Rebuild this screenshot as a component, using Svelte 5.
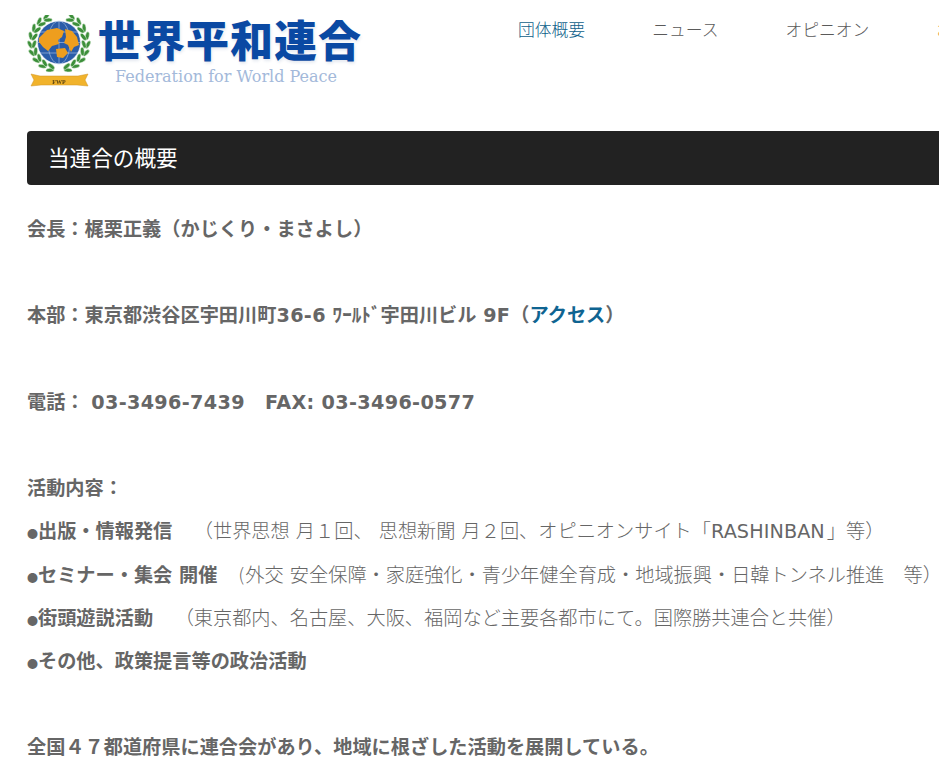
<script>
  const nav = [
    { label: '団体概要', active: true },
    { label: 'ニュース' },
    { label: 'オピニオン' },
    { label: 'お問い合わせ', accent: true }
  ];

  const cx = 32;
  const cy = 27.5;
  const steps = [26, 43, 60, 77, 94, 111, 128, 145, 162];
  const leaves = steps.flatMap((t) =>
    [-1, 1].flatMap((side) =>
      [
        { r: 29, tilt: 24 },
        { r: 25, tilt: -24 }
      ].map(({ r, tilt }) => {
        const a = (t * Math.PI) / 180;
        return {
          x: cx + side * r * Math.sin(a),
          y: cy - r * Math.cos(a),
          rot: side * (t - 90 + tilt)
        };
      })
    )
  );
</script>

<div class="page">
  <header class="header">
    <a class="logo" href="#top">
      <svg class="emblem" viewBox="0 0 64 76" width="64" height="76" aria-hidden="true">
        <g fill="#3c8f3a" stroke="#e6f2e4" stroke-width=".5">
          {#each leaves as l}
            <ellipse cx={l.x} cy={l.y} rx="1.9" ry="4.2" transform="rotate({l.rot} {l.x} {l.y})" />
          {/each}
        </g>
        <circle cx={cx} cy={cy} r="21.5" fill="#2a5ca8" stroke="#fff" stroke-width=".6" />
        <g fill="none" stroke="#b5cbe8" stroke-width=".6">
          <ellipse cx={cx} cy={cy} rx="11" ry="21.5" />
          <path d="M10.500 27.500h43M13 17h38M13 38h38M32 6v43" />
        </g>
        <path d="M12 23L20 15L30 13L37 16L35 22L31 25L32 29L25 31L21 36L16 32L12 27ZM38 14L45 16L50 22L52 30L47 32L44 37L41 30L37 28L39 22ZM29 34L38 33L41 38L36 43L30 42Z" fill="#ee9e1e" />
        <path d="M4 59l9 2h38l10-2-3 6 3 6-11-1H14L4 71l3-6z" fill="#f1b32c" stroke="#cf9320" stroke-width=".5" />
        <text x="32" y="68.500" text-anchor="middle" class="fwp">FWP</text>
      </svg>
      <span class="wordmark">
        <span class="name">世界平和連合</span>
        <span class="tagline">Federation for World Peace</span>
      </span>
    </a>
    <nav class="nav">
      {#each nav as item}
        <a href="#top" class:active={item.active} class:accent={item.accent}>{item.label}</a>
      {/each}
    </nav>
  </header>

  <main class="main">
    <h1 class="title">当連合の概要</h1>
    <div class="body">
      <strong>会長：梶栗正義（かじくり・まさよし）</strong><br /><br />
      <strong>本部：東京都渋谷区宇田川町<span class="lat">36-6</span> ﾜｰﾙﾄﾞ宇田川ビル <span class="lat">9F</span>（<a href="#top">アクセス</a>）</strong><br /><br />
      <strong>電話： <span class="lat">03-3496-7439</span> &nbsp; <span class="lat">FAX: 03-3496-0577</span></strong><br /><br />
      <strong>活動内容：</strong><br />
      <span class="dot">●</span><strong>出版・情報発信</strong><span class="note">（世界思想 月１回、 思想新聞 月２回、オピニオンサイト「<span class="rashin">RASHINBAN</span>」等）</span><br />
      <span class="dot">●</span><strong>セミナー・集会 開催</strong><span class="note narrow">(外交 安全保障・家庭強化・青少年健全育成・地域振興・日韓トンネル推進　等）</span><br />
      <span class="dot">●</span><strong>街頭遊説活動</strong><span class="note">（東京都内、名古屋、大阪、福岡など主要各都市にて。国際勝共連合と共催）</span><br />
      <span class="dot">●</span><strong>その他、政策提言等の政治活動</strong><br /><br />
      <strong>全国４７都道府県に連合会があり、地域に根ざした活動を展開している。</strong>
    </div>
  </main>
</div>

<style>
  :global(html), :global(body) {
    margin: 0;
    overflow: hidden;
    background: #fff;
  }
  .page {
    width: 1200px;
    padding: 0 0 0 27px;
    box-sizing: border-box;
    font-family: "DejaVu Sans", "Noto Sans CJK JP", sans-serif;
    color: #666;
  }
  .header {
    display: flex;
    height: 131px;
    align-items: flex-start;
  }
  .logo {
    display: flex;
    gap: 7px;
    padding-top: 15px;
    text-decoration: none;
    width: 491px;
    flex: none;
  }
  .emblem {
    flex: none;
    filter: blur(.35px);
  }
  .fwp {
    font: bold 6px "Liberation Serif", serif;
    fill: #5a4210;
  }
  .wordmark {
    display: flex;
    flex-direction: column;
    align-items: center;
    margin-top: -2px;
  }
  .name {
    font: 900 43px/50px "Noto Sans CJK JP", sans-serif;
    letter-spacing: 1px;
    color: #0a49a3;
    text-shadow: 1px 2px 3px rgba(40, 70, 130, .12);
  }
  .tagline {
    margin: 4px 8px 0 0;
    font: 16px/20px "DejaVu Serif", serif;
    color: #a3b9da;
  }
  .nav {
    display: flex;
    gap: 67px;
    padding-top: 16px;
    white-space: nowrap;
  }
  .nav a {
    font: 300 16.8px/26px "Noto Sans CJK JP", sans-serif;
    color: #5a5a5a;
    text-decoration: none;
  }
  .nav a.active {
    color: #0f5f8a;
  }
  .nav a.accent {
    color: #e8913c;
  }
  .title {
    margin: 0;
    background: #222;
    color: #fff;
    border-radius: 4px;
    height: 54px;
    padding: 0 21px;
    font: 400 21.6px/52px "Noto Sans CJK JP", sans-serif;
  }
  .body {
    margin-top: 23px;
    font-size: 19.2px;
    line-height: 43.2px;
    white-space: nowrap;
    font-weight: 300;
  }
  .body strong {
    font-weight: 700;
  }
  .body a {
    color: #0f6491;
    text-decoration: none;
  }
  .lat {
    letter-spacing: .35px;
  }
  .rashin {
    font-weight: 400;
    letter-spacing: .1px;
    margin-right: 2px;
  }
  .dot {
    font: 700 11px "Noto Sans CJK JP", sans-serif;
  }
  .note {
    margin-left: 21.5px;
  }
  .note.narrow {
    margin-left: 20.5px;
  }
</style>
